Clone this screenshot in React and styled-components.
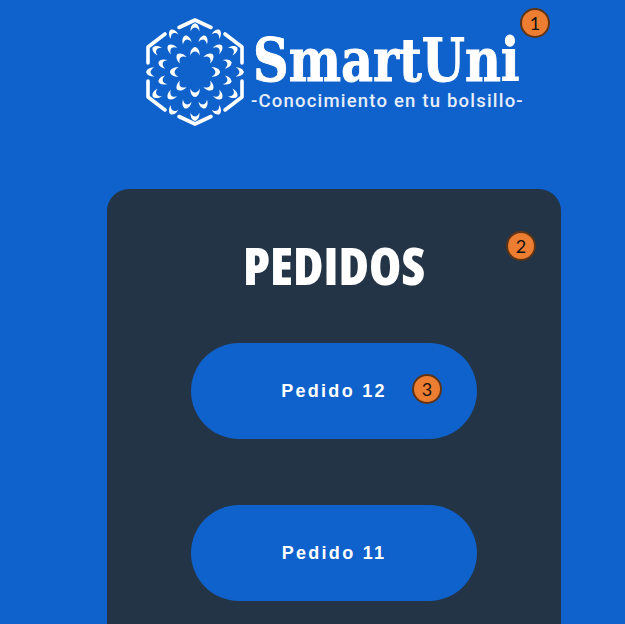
import styled, { createGlobalStyle } from 'styled-components';

const GlobalStyle = createGlobalStyle`
  html, body {
    margin: 0;
    height: 624px;
    overflow: hidden;
    background: #0f62cc;
  }
`;

const Page = styled.div`
  display: flex;
  flex-direction: column;
  height: 624px;
  overflow: hidden;
  background: #0f62cc;
`;

const Header = styled.header`
  position: relative;
  display: flex;
  align-items: flex-start;
  gap: 8px;
  height: 189px;
  padding: 17px 0 0 145px;
  box-sizing: border-box;
  flex-shrink: 0;
`;

const Brand = styled.div`
  display: flex;
  flex-direction: column;
  width: 275px;
`;

const BrandName = styled.div`
  font-family: "DejaVu Serif Condensed", "DejaVu Serif", serif;
  font-weight: 700;
  font-size: 60px;
  line-height: 50px;
  margin-top: 18px;
  color: #fff;
  white-space: nowrap;
  transform: scaleX(0.915);
  transform-origin: left center;
  -webkit-text-stroke: 0.9px #fff;
`;

const Tagline = styled.div`
  font-family: Roboto, sans-serif;
  font-weight: 500;
  font-size: 18.5px;
  line-height: 20px;
  margin-top: 6px;
  margin-left: -2px;
  letter-spacing: 1.2px;
  color: #e6eefa;
  white-space: nowrap;
`;

const Card = styled.section`
  position: relative;
  display: flex;
  flex-direction: column;
  align-items: center;
  width: 454px;
  height: 520px;
  margin-left: 107px;
  flex-shrink: 0;
  background: #243447;
  border-radius: 22px;
`;

const Title = styled.h1`
  margin: 44px 0 46px;
  font-family: "Open Sans", "Liberation Sans", sans-serif;
  font-stretch: 75%;
  font-weight: 800;
  font-size: 52px;
  line-height: 64px;
  color: #fff;
`;

const OrderList = styled.div`
  display: flex;
  flex-direction: column;
  gap: 66px;
`;

const OrderButton = styled.button`
  position: relative;
  width: 286px;
  height: 96px;
  border: 0;
  border-radius: 48px;
  background: #0f62cc;
  color: #fff;
  font-family: "Liberation Sans", Arial, sans-serif;
  font-weight: 700;
  font-size: 18px;
  letter-spacing: 2.3px;
`;

const Badge = styled.span`
  position: absolute;
  top: ${(p) => p.$top}px;
  left: ${(p) => p.$left}px;
  display: flex;
  align-items: center;
  justify-content: center;
  width: 30px;
  height: 30px;
  box-sizing: border-box;
  border: 2px solid #5f3415;
  border-radius: 50%;
  background: #ed7d31;
  color: #111;
  font-family: Lato, sans-serif;
  font-weight: 400;
  font-size: 18px;
  letter-spacing: 0;
`;

const petal = 'M-4.2 3.2C-4.6-1.6-2-4.4 0-4.6C2-4.4 4.6-1.6 4.2 3.2C3.4 1 1.6-.4 0-.4C-1.6-.4-3.4 1-4.2 3.2Z';

const rings = [
  { count: 8, radius: 20, offset: 0, scale: 1.1 },
  { count: 12, radius: 33, offset: 15, scale: 1.05 },
  { count: 12, radius: 44, offset: 0, scale: 1.05 },
];

function Mandala() {
  return (
    <svg width="100" height="110" viewBox="-50 -55 100 110" aria-hidden="true">
      <g fill="none" stroke="#fff" strokeWidth="3.6" strokeLinecap="round" strokeLinejoin="round">
        <path d="M-16-44.5L0-52L16-44.5" />
        <path d="M-16 44.5L0 52L16 44.5" />
        <path d="M30-38L47-25V-9" />
        <path d="M-30-38L-47-25V-9" />
        <path d="M30 38L47 25V9" />
        <path d="M-30 38L-47 25V9" />
      </g>
      <g fill="#fff">
        {rings.map((ring) =>
          Array.from({ length: ring.count }, (_, i) => (
            <path
              key={`${ring.radius}-${i}`}
              d={petal}
              transform={`rotate(${ring.offset + (i * 360) / ring.count}) translate(0 ${-ring.radius}) scale(${ring.scale})`}
            />
          ))
        )}
      </g>
    </svg>
  );
}

export default function App() {
  return (
    <Page>
      <GlobalStyle />
      <Header>
        <Mandala />
        <Brand>
          <BrandName>SmartUni</BrandName>
          <Tagline>-Conocimiento en tu bolsillo-</Tagline>
        </Brand>
        <Badge $top={8} $left={520}>1</Badge>
      </Header>
      <Card>
        <Title>PEDIDOS</Title>
        <Badge $top={42} $left={399}>2</Badge>
        <OrderList>
          <OrderButton>
            Pedido 12
            <Badge $top={31} $left={221}>3</Badge>
          </OrderButton>
          <OrderButton>Pedido 11</OrderButton>
        </OrderList>
      </Card>
    </Page>
  );
}
